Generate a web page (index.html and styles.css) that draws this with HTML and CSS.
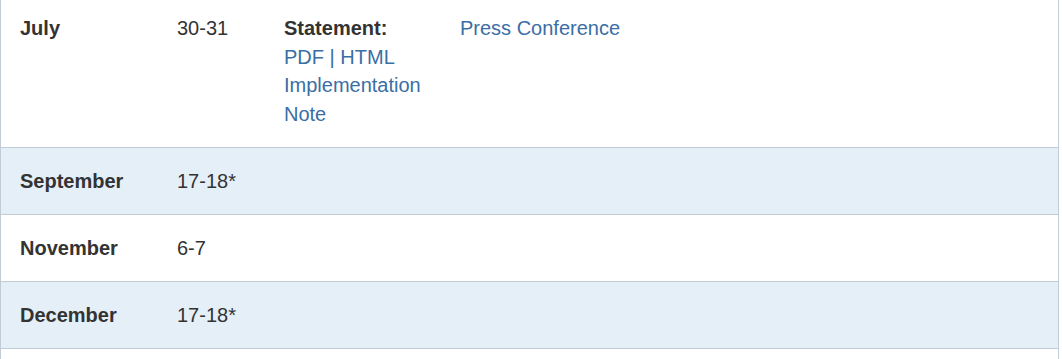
FILE: index.html
```html
<!DOCTYPE html>
<html>
<head>
<meta charset="utf-8">
<link rel="stylesheet" href="styles.css">
</head>
<body>
<table class="cal">
  <tbody>
    <tr class="row">
      <td class="month">July</td>
      <td class="days">30-31</td>
      <td class="stmt"><strong>Statement:</strong><br><a href="#">PDF</a><span class="sep"> | </span><a href="#">HTML</a><br><a href="#">Implementation Note</a></td>
      <td class="press"><a href="#">Press Conference</a></td>
    </tr>
    <tr class="row alt">
      <td class="month">September</td>
      <td class="days">17-18*</td>
      <td class="stmt"></td>
      <td class="press"></td>
    </tr>
    <tr class="row">
      <td class="month">November</td>
      <td class="days">6-7</td>
      <td class="stmt"></td>
      <td class="press"></td>
    </tr>
    <tr class="row alt">
      <td class="month">December</td>
      <td class="days">17-18*</td>
      <td class="stmt"></td>
      <td class="press"></td>
    </tr>
    <tr class="row">
      <td class="month">&nbsp;</td>
      <td class="days"></td>
      <td class="stmt"></td>
      <td class="press"></td>
    </tr>
  </tbody>
</table>
</body>
</html>
```

FILE: styles.css
```css
html, body {
  margin: 0;
  padding: 0;
  background: #fff;
}
body {
  font-family: "Liberation Sans", Arial, sans-serif;
  font-size: 20px;
  line-height: 28.5px;
  color: #333;
  overflow: hidden;
}
.cal {
  border-collapse: collapse;
  width: 1059px;
  margin-top: -6px;
  border-left: 1px solid #c2ccd7;
  border-right: 1px solid #c2ccd7;
}
.row td {
  vertical-align: top;
  padding: 19px 19px 18.5px 19px;
  border-top: 1px solid #c2ccd7;
  border-bottom: 1px solid #c2ccd7;
}
.alt td {
  background: #e5eff8;
}
.month {
  width: 119px;
  font-weight: bold;
}
.days {
  width: 69px;
}
.stmt {
  width: 138px;
}
.stmt strong {
  font-weight: bold;
}
.sep {
  color: #3a6ea5;
}
a {
  color: #3a6ea5;
  text-decoration: none;
}
```
